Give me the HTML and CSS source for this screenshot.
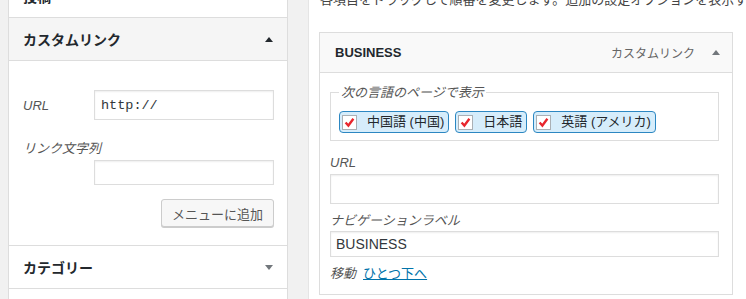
FILE: index.html
```html
<!DOCTYPE html>
<html lang="ja">
<head>
<meta charset="utf-8">
<link rel="stylesheet" href="styles.css">
</head>
<body>
<div class="page">
  <aside class="side">
    <section class="acc">
      <h3 class="acc-head">投稿<span class="arrow down"></span></h3>
    </section>
    <section class="acc open">
      <h3 class="acc-head">カスタムリンク<span class="arrow up"></span></h3>
      <div class="acc-body">
        <div class="url-row">
          <label class="lbl">URL</label>
          <input class="inp inp-url" type="text" value="http://">
        </div>
        <label class="lbl lbl-block">リンク文字列</label>
        <div class="text-row"><input class="inp inp-text" type="text"></div>
        <div class="btn-row"><button class="btn" type="button">メニューに追加</button></div>
      </div>
    </section>
    <section class="acc">
      <h3 class="acc-head">カテゴリー<span class="arrow down grey"></span></h3>
    </section>
    <section class="acc">
      <h3 class="acc-head"><span class="arrow down grey"></span></h3>
    </section>
  </aside>

  <main class="main">
    <p class="intro">各項目をドラッグして順番を変更します。追加の設定オプションを表示するには項目の右にある矢印をクリックしてください。</p>
    <div class="item">
      <div class="item-head">
        <span class="item-title">BUSINESS</span>
        <span class="item-type">カスタムリンク</span>
        <span class="arrow up grey"></span>
      </div>
      <div class="item-body">
        <fieldset class="langs">
          <legend class="lbl">次の言語のページで表示</legend>
          <div class="pills">
            <label class="pill"><span class="cb"><svg viewBox="0 0 15 15"><path d="M3 7.4 L6.2 11 L12 3.2"/></svg></span>中国語 (中国)</label>
            <label class="pill"><span class="cb"><svg viewBox="0 0 15 15"><path d="M3 7.4 L6.2 11 L12 3.2"/></svg></span>日本語</label>
            <label class="pill"><span class="cb"><svg viewBox="0 0 15 15"><path d="M3 7.4 L6.2 11 L12 3.2"/></svg></span>英語 (アメリカ)</label>
          </div>
        </fieldset>
        <label class="lbl field-lbl">URL</label>
        <input class="inp wide inp-url2" type="text">
        <label class="lbl field-lbl nav-lbl">ナビゲーションラベル</label>
        <input class="inp wide inp-nav" type="text" value="BUSINESS">
        <p class="move"><span class="lbl">移動</span><a class="move-link" href="#">ひとつ下へ</a></p>
      </div>
    </div>
  </main>
</div>
</body>
</html>
```

FILE: styles.css
```css
* { box-sizing: border-box; }
html, body { margin: 0; padding: 0; }
body {
  background: #f1f1f1;
  font-family: "Liberation Sans", "Noto Sans CJK JP", sans-serif;
  font-size: 13px;
  color: #23282d;
  width: 746px;
  height: 299px;
  overflow: hidden;
}
.page {
  display: flex;
  gap: 20px;
  padding-left: 8px;
  align-items: flex-start;
  height: 299px;
}

/* left accordion */
.side {
  width: 280px;
  flex: none;
  margin-top: -25px;
  background: #fff;
  border-left: 1px solid #ddd;
  border-right: 1px solid #ddd;
}
.acc { border-bottom: 1px solid #ddd; }
.acc-head {
  margin: 0;
  height: 42px;
  display: flex;
  align-items: center;
  justify-content: space-between;
  padding: 0 14px 0 14px;
  font-size: 14px;
  font-weight: 700;
  color: #23282d;
}
.open .acc-head {
  height: 43px;
  background: #f5f5f5;
  border-bottom: 1px solid #ddd;
}
.arrow {
  width: 0;
  height: 0;
  border-left: 4px solid transparent;
  border-right: 4px solid transparent;
}
.acc-head .arrow:only-child { margin-left: auto; }
.arrow.up { border-bottom: 5px solid #23282d; }
.arrow.down { border-top: 5px solid #23282d; }
.arrow.up.grey { border-bottom-color: #72777c; }
.arrow.down.grey { border-top-color: #72777c; }

.acc-body { padding: 29px 13px 18px 14px; }
.lbl {
  font-style: italic;
  color: #555;
  font-size: 13px;
}
.url-row {
  display: flex;
  align-items: center;
  justify-content: space-between;
  height: 30px;
}
.inp {
  display: block;
  border: 1px solid #ddd;
  box-shadow: inset 0 1px 2px rgba(0,0,0,.07);
  background: #fff;
  color: #32373c;
  padding: 0 6px;
  margin: 0;
  outline: none;
}
.inp-url {
  width: 180px;
  height: 30px;
  font-family: "Liberation Mono", "DejaVu Sans Mono", monospace;
  font-size: 13.5px;
}
.lbl-block {
  display: block;
  margin-top: 19px;
  line-height: 20px;
}
.text-row { display: flex; justify-content: flex-end; margin-top: 1px; }
.inp-text { width: 180px; height: 25px; }
.btn-row { display: flex; justify-content: flex-end; margin-top: 14px; }
.btn {
  height: 28px;
  padding: 0 10px;
  font-family: "Liberation Sans", "Noto Sans CJK JP", sans-serif;
  font-size: 13px;
  color: #555;
  background: #f7f7f7;
  border: 1px solid #ccc;
  border-radius: 3px;
  box-shadow: 0 1px 0 #ccc;
}

/* right main */
.main {
  flex: 1;
  min-width: 0;
  height: 299px;
  overflow: hidden;
  background: #fff;
  border-left: 1px solid #e5e5e5;
  padding: 0 13px 0 10px;
}
.intro {
  margin: -10px 0 0 1px;
  line-height: 19px;
  white-space: nowrap;
  color: #444;
  font-size: 13px;
}
.item {
  margin-top: 23px;
  width: 414px;
  border: 1px solid #ddd;
}
.item-head {
  height: 40px;
  background: #f9f9f9;
  border-bottom: 1px solid #ddd;
  display: flex;
  align-items: center;
  padding: 0 12px 0 15px;
}
.item-title {
  font-weight: 700;
  font-size: 13px;
  color: #23282d;
  flex: 1;
}
.item-type {
  font-size: 12px;
  color: #666;
  margin-right: 17px;
}
.item-body { padding: 10px 13px 10px 10px; }
.langs {
  margin: 0;
  border: 1px solid #ddd;
  padding: 9px 8px 7px 8px;
}
.langs legend {
  padding: 0 2px;
  line-height: 19px;
}
.pills { display: flex; gap: 6px; }
.pill {
  display: flex;
  align-items: center;
  height: 22px;
  padding: 0 4px 0 2px;
  background: #d6edfb;
  border: 1px solid #2c87c2;
  border-radius: 4px;
  font-size: 13px;
  color: #23282d;
  line-height: 20px;
}
.cb {
  width: 15px;
  height: 15px;
  background: #fff;
  border: 1px solid #aab0b5;
  margin-right: 10px;
  display: flex;
}
.cb svg {
  width: 13px;
  height: 13px;
  fill: none;
  stroke: #e8262d;
  stroke-width: 2.7;
}
.field-lbl {
  display: block;
  margin-top: 12px;
  line-height: 20px;
}
.nav-lbl { margin-top: 7px; }
.wide { width: 100%; }
.inp-url2 { height: 30px; margin-top: 1px; }
.inp-nav {
  height: 26px;
  font-family: "Liberation Sans", "Noto Sans CJK JP", sans-serif;
  font-size: 14px;
  padding: 0 5px;
}
.move {
  margin: 7px 0 0 0;
  line-height: 20px;
  font-size: 13px;
}
.move-link {
  margin-left: 7px;
  color: #0073aa;
  text-decoration: underline;
}
```
